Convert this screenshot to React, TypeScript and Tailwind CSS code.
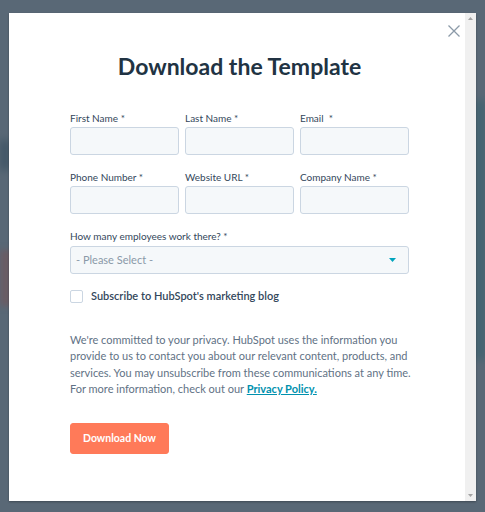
import React from "react";

const font = { fontFamily: "Lato, 'Open Sans', sans-serif" };

function Field({ label }: { label: string }) {
  return (
    <div className="flex flex-col">
      <label className="text-[10px] leading-[14px] text-[#33475b] mb-[2px] whitespace-pre">{label}</label>
      <div className="h-[28px] rounded-[3px] border border-[#cbd6e2] bg-[#f5f8fa]" />
    </div>
  );
}

export default function App() {
  return (
    <div className="relative w-[485px] h-[512px] overflow-hidden bg-[#596876]" style={font}>
      <div className="absolute left-0 top-[250px] w-[12px] h-[56px] bg-[#6a5c64] blur-[3px]" />
      <div className="absolute left-0 top-[140px] w-[10px] h-[30px] bg-[#3f5565] blur-[4px]" />
      <div className="absolute right-0 top-[100px] w-[10px] h-[260px] bg-[#3f6270] blur-[4px]" />
      <div className="relative pt-[13px] pl-[9px]">
        <div className="flex w-[467px] h-[488px] bg-white shadow-[0_1px_2px_rgba(0,0,0,0.3)]">
          <div className="relative flex-1 flex flex-col pl-[61px] pt-[38px]">
            <button className="absolute right-[4px] top-[11px] w-[14px] h-[14px] text-[#8b9aa8]">
              <svg viewBox="0 0 14 14" width="14" height="14" fill="none" stroke="currentColor" strokeWidth="1.3">
                <path d="M1.5 1.5 L12.5 12.5 M12.5 1.5 L1.5 12.5" />
              </svg>
            </button>
            <h1 className="w-[339px] text-center text-[23px] leading-[30px] font-bold text-[#213343]">Download the Template</h1>
            <div className="w-[339px] mt-[30px] grid grid-cols-3 gap-x-[6px] gap-y-[15px]">
              <Field label="First Name *" />
              <Field label="Last Name *" />
              <Field label="Email  *" />
              <Field label="Phone Number *" />
              <Field label="Website URL *" />
              <Field label="Company Name *" />
            </div>
            <div className="w-[339px] mt-[15px] flex flex-col">
              <label className="text-[10px] leading-[14px] text-[#33475b] mb-[3px]">How many employees work there? *</label>
              <div className="h-[28px] rounded-[3px] border border-[#cbd6e2] bg-[#f5f8fa] flex items-center justify-between pl-[5px] pr-[12px]">
                <span className="text-[11px] text-[#8a99a8]">- Please Select -</span>
                <svg width="7" height="4" viewBox="0 0 7 4"><path d="M0 0 L7 0 L3.5 4 Z" fill="#00a4bd" /></svg>
              </div>
            </div>
            <div className="mt-[15px] flex items-center">
              <div className="w-[13px] h-[13px] rounded-[2px] border border-[#cbd6e2] bg-white" />
              <span className="ml-[8px] text-[11px] leading-[14px] font-semibold text-[#33475b]">Subscribe to HubSpot's marketing blog</span>
            </div>
            <p className="w-[345px] mt-[29px] text-[11px] leading-[16.3px] text-[#5f7285] whitespace-nowrap">
              We're committed to your privacy. HubSpot uses the information you<br />
              provide to us to contact you about our relevant content, products, and<br />
              services. You may unsubscribe from these communications at any time.<br />
              For more information, check out our{" "}
              <a className="font-bold text-[#0091ae] underline">Privacy Policy.</a>
            </p>
            <button className="mt-[26px] w-[99px] h-[31px] rounded-[3px] bg-[#ff7a59] border border-[#ff7a59] text-white text-[10.5px] font-bold">Download Now</button>
          </div>
          <div className="w-[11px] bg-[#f0f0f0] flex flex-col justify-between items-center py-[4px]">
            <svg width="5" height="3" viewBox="0 0 5 3"><path d="M0 3 L5 3 L2.5 0 Z" fill="#a3a3a3" /></svg>
            <svg width="5" height="3" viewBox="0 0 5 3"><path d="M0 0 L5 0 L2.5 3 Z" fill="#a3a3a3" /></svg>
          </div>
        </div>
      </div>
    </div>
  );
}
